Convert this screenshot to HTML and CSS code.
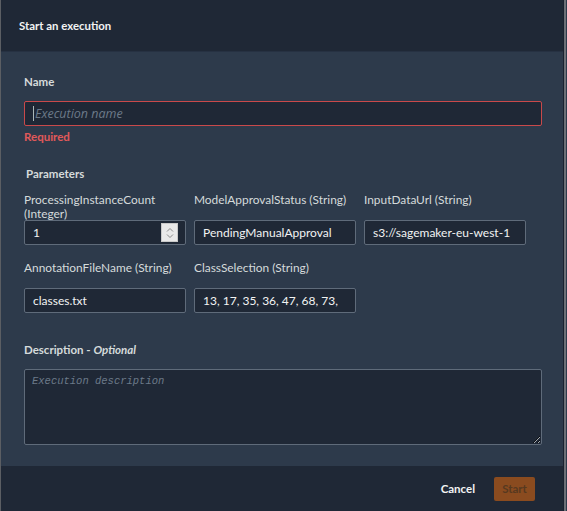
FILE: index.html
```html
<!DOCTYPE html>
<html>
<head>
<meta charset="utf-8">
<link rel="stylesheet" href="styles.css">
</head>
<body>
<div class="dialog">
  <div class="header"><h1 class="title">Start an execution</h1></div>
  <div class="content">
    <div class="name-field">
      <label class="label">Name</label>
      <div class="input input-error"><span class="caret"></span><span class="placeholder">Execution name</span></div>
      <div class="error">Required</div>
    </div>
    <div class="params-title">Parameters</div>
    <div class="params">
      <div class="field">
        <label class="label plabel">ProcessingInstanceCount (Integer)</label>
        <div class="input small num"><span class="value">1</span>
          <span class="spinner"><svg width="12" height="14" viewBox="0 0 12 14"><path d="M3 5.5 L6 2.5 L9 5.5" fill="none" stroke="#8a8a8a" stroke-width="1"/><path d="M3 8.5 L6 11.5 L9 8.5" fill="none" stroke="#8a8a8a" stroke-width="1"/></svg></span>
        </div>
      </div>
      <div class="field">
        <label class="label plabel">ModelApprovalStatus (String)</label>
        <div class="input small"><span class="value">PendingManualApproval</span></div>
      </div>
      <div class="field">
        <label class="label plabel">InputDataUrl (String)</label>
        <div class="input small"><span class="value">s3://sagemaker-eu-west-1</span></div>
      </div>
      <div class="field">
        <label class="label plabel">AnnotationFileName (String)</label>
        <div class="input small"><span class="value">classes.txt</span></div>
      </div>
      <div class="field">
        <label class="label plabel">ClassSelection (String)</label>
        <div class="input small"><span class="value">13, 17, 35, 36, 47, 68, 73,</span></div>
      </div>
    </div>
    <div class="desc-field">
      <label class="label">Description - <em>Optional</em></label>
      <textarea class="textarea" placeholder="Execution description"></textarea>
    </div>
  </div>
  <div class="footer">
    <span class="cancel">Cancel</span>
    <span class="start">Start</span>
  </div>
</div>
</body>
</html>
```
FILE: styles.css
```css
html, body {
  margin: 0;
  padding: 0;
  background: #2d3a4b;
}
body {
  width: 567px;
  height: 511px;
  overflow: hidden;
  font-family: "Lato", "Open Sans", sans-serif;
}
.dialog {
  width: 564px;
  height: 511px;
  display: flex;
  flex-direction: column;
  border-left: 1px solid #5b5e63;
  border-right: 1px solid #1b2230;
  box-shadow: 2px 0 0 #6c7077;
  box-sizing: border-box;
  background: #2d3a4b;
}
.header {
  height: 52px;
  background: #1f2836;
  display: flex;
  align-items: center;
  padding-left: 18px;
  border-bottom: 1px solid #263142;
  box-sizing: border-box;
}
.title {
  margin: 0;
  font-size: 11.4px;
  font-weight: 700;
  color: #f2f3f3;
}
.content {
  flex: 1;
  padding: 22px 0 0 23px;
}
.label {
  display: block;
  font-size: 11.5px;
  font-weight: 700;
  color: #d5dbdb;
  line-height: 16px;
}
.label em {
  font-style: italic;
}
.name-field .label {
  margin-bottom: 11px;
}
.input {
  box-sizing: border-box;
  height: 25px;
  background: #1f2836;
  border: 1px solid #5f6b7a;
  border-radius: 2px;
  display: flex;
  align-items: center;
  position: relative;
}
.input-error {
  width: 518px;
  border-color: #c9494a;
  padding-left: 8px;
}
.caret {
  width: 1px;
  height: 15px;
  background: #aab7b8;
  margin-right: 1px;
}
.placeholder {
  font-family: "Open Sans", sans-serif;
  font-style: italic;
  font-size: 12.5px;
  color: #6c7a89;
}
.error {
  font-size: 11.5px;
  font-weight: 700;
  color: #e0595a;
  margin-top: 3px;
  line-height: 16px;
}
.params-title {
  font-size: 11.5px;
  font-weight: 700;
  color: #d5dbdb;
  margin: 21px 0 0 2px;
  line-height: 16px;
}
.params {
  display: grid;
  grid-template-columns: 162px 162px 162px;
  column-gap: 8px;
  row-gap: 16px;
  margin-top: 11px;
}
.plabel {
  font-weight: 400;
  font-size: 11.9px;
  height: 27px;
  line-height: 14px;
}
.small {
  width: 162px;
  padding-left: 8px;
  overflow: hidden;
}
.value {
  font-family: "Lato", sans-serif;
  font-size: 12px;
  color: #f2f3f3;
  white-space: nowrap;
}
.spinner {
  position: absolute;
  right: 7px;
  top: 2px;
  width: 17px;
  height: 19px;
  background: #e9e9e9;
  border: 1px solid #c9c9c9;
  box-sizing: border-box;
  display: flex;
  align-items: center;
  justify-content: center;
}
.desc-field {
  margin-top: 29px;
}
.desc-field .label {
  margin-bottom: 11px;
}
.textarea {
  display: block;
  box-sizing: border-box;
  width: 518px;
  height: 76px;
  background: #1f2836;
  border: 1px solid #5f6b7a;
  border-radius: 2px;
  padding: 5px 7px;
  font-family: "Liberation Mono", monospace;
  font-style: italic;
  font-size: 10.5px;
  color: #f2f3f3;
  margin: 0;
  resize: both;
}
.textarea::placeholder {
  color: #6c7a89;
}
.footer {
  height: 45px;
  background: #1f2836;
  display: flex;
  align-items: center;
  justify-content: flex-end;
  padding-right: 28px;
  gap: 19px;
}
.cancel {
  font-size: 11.5px;
  font-weight: 700;
  color: #f2f3f3;
}
.start {
  width: 41px;
  height: 24px;
  box-sizing: border-box;
  background: #8a4b1f;
  border-radius: 2px;
  color: #57391f;
  font-size: 11.5px;
  font-weight: 700;
  display: flex;
  align-items: center;
  justify-content: center;
}
```
